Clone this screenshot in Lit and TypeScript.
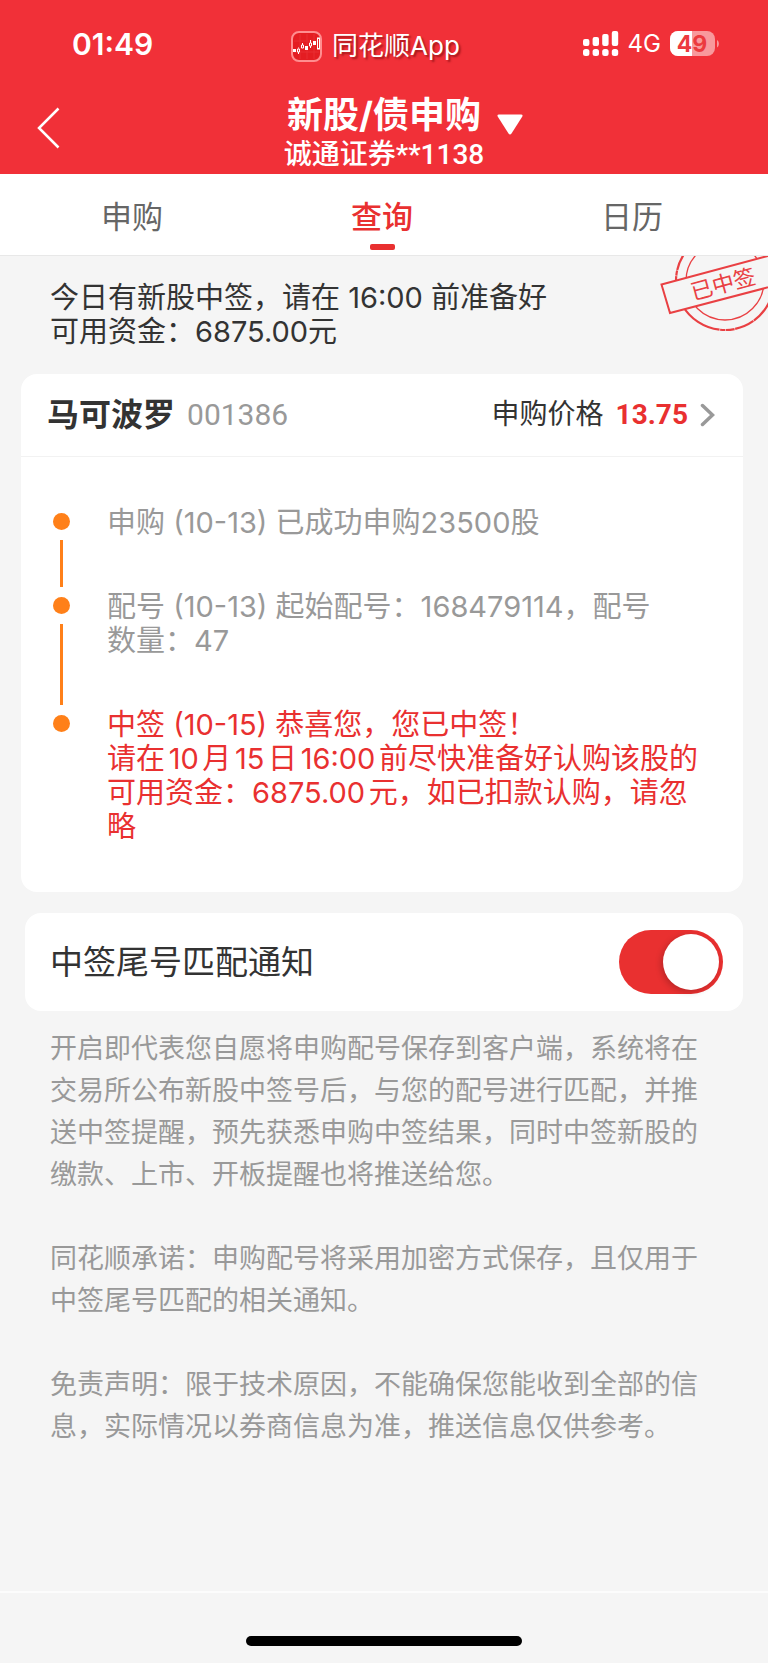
import { LitElement, html, css, svg } from "lit";
import { customElement, property, state } from "lit/decorators.js";
import { classMap } from "lit/directives/class-map.js";

interface Step {
  lines: string[];
  highlight?: boolean;
}

const TABS = ["申购", "查询", "日历"];

const STEPS: Step[] = [
  { lines: ["申购 (10-13) 已成功申购23500股"] },
  { lines: ["配号 (10-13) 起始配号：168479114，配号", "数量：47"] },
  {
    lines: [
      "中签 (10-15) 恭喜您，您已中签！",
      "请在10月15日16:00前尽快准备好认购该股的",
      "可用资金：6875.00元，如已扣款认购，请忽",
      "略",
    ],
    highlight: true,
  },
];

const NOTES = [
  "开启即代表您自愿将申购配号保存到客户端，系统将在交易所公布新股中签号后，与您的配号进行匹配，并推送中签提醒，预先获悉申购中签结果，同时中签新股的缴款、上市、开板提醒也将推送给您。",
  "同花顺承诺：申购配号将采用加密方式保存，且仅用于中签尾号匹配的相关通知。",
  "免责声明：限于技术原因，不能确保您能收到全部的信息，实际情况以券商信息为准，推送信息仅供参考。",
];

@customElement("status-bar")
export class StatusBar extends LitElement {
  static styles = css`
    :host {
      display: grid;
      grid-template-columns: 1fr auto 1fr;
      align-items: center;
      height: 88px;
      padding: 0 49px 0 32px;
      box-sizing: border-box;
      color: #fff;
    }
    .time {
      padding-left: 40px;
      font-size: 30px;
      font-weight: 600;
      line-height: 40px;
    }
    .source {
      display: flex;
      align-items: center;
      gap: 10px;
      padding-top: 4px;
      font-size: 26px;
      line-height: 32px;
      text-shadow: 2px 2px 2px rgba(90, 0, 0, 0.5);
    }
    .right {
      display: flex;
      justify-content: flex-end;
      align-items: center;
      gap: 9px;
      font-size: 24px;
      line-height: 32px;
    }
    svg {
      display: block;
      flex: none;
      overflow: visible;
    }
    .level {
      font-size: 23px;
      font-weight: 700;
    }
  `;

  render() {
    const bars = [0, 1, 2, 3];
    const tops = [8, 6, 3, 0];
    return html`
      <span class="time">01:49</span>
      <span class="source">
        <svg width="31" height="31" viewBox="0 0 31 31" aria-hidden="true">
          <rect x="1" y="1" width="29" height="29" rx="7" fill="#e41d22" stroke="#ff8d8f" stroke-width="2" />
          <path d="M9 3v25M16 3v25M23 3v25M3 10h25M3 21h25" stroke="#ee3f43" stroke-width="1" opacity=".5" />
          <g fill="#fff">
            <rect x="2" y="18" width="3" height="3" />
            <rect x="14" y="15" width="3" height="4" />
            <rect x="22" y="10" width="3" height="4" />
          </g>
          <g fill="none" stroke="#fff" stroke-width="1">
            <path d="M7.5 16.500v1M6.500 18h2v3h-2zM7.500 21v2M11.500 12v2M10.500 14h2v3h-2zM19.500 9v3M18.500 12h2v3h-2zM19.500 15v2" />
            <rect x="26.500" y="7" width="2" height="11" />
          </g>
        </svg>
        <span>同花顺App</span>
      </span>
      <span class="right">
        <svg width="36" height="26" viewBox="0 0 36 26" fill="#fff" aria-label="信号">
          ${bars.map(
            (i) => svg`
              <rect x=${i * 9.6} y=${tops[i]} width="6.4" height=${15 - tops[i]} rx="2" />
              <rect x=${i * 9.6} y="18" width="6.4" height="7" rx="2.500" />`,
          )}
        </svg>
        <span>4G</span>
        <svg width="49" height="26" viewBox="0 0 49 26" aria-label="电量">
          <rect width="45" height="25" rx="8" fill="#f8999c" />
          <path d="M8 0H22V25H8a8 8 0 0 1-8-8V8a8 8 0 0 1 8-8z" fill="#fff" />
          <path d="M47 9c2.500 1.500 2.500 6 0 7.500z" fill="#f8999c" />
          <text class="level" x="22" y="21" text-anchor="middle" fill="#ec3a3e">49</text>
        </svg>
      </span>
    `;
  }
}

@customElement("win-stamp")
export class WinStamp extends LitElement {
  static styles = css`
    :host {
      display: block;
    }
    svg {
      display: block;
    }
    .label {
      font-size: 22px;
    }
  `;

  render() {
    return html`
      <svg width="110" height="78" viewBox="0 0 110 78" role="img" aria-label="已中签">
        <g fill="none" stroke="#e94043">
          <circle cx="67" cy="25" r="49" stroke-width="2.200" stroke-dasharray="46 .6 20 .6 9 .6 5 .6" />
          <circle cx="67" cy="25" r="39" stroke-width="1.300" />
          <path d="M3.500 28.500L130 -5.500L138 24L12 57z" fill="#f5f5f5" stroke-width="2" />
        </g>
        <text
          class="label"
          x="65"
          y="36"
          text-anchor="middle"
          fill="#e94043"
          transform="rotate(-15 65 28)"
        >已中签</text>
      </svg>
    `;
  }
}

@customElement("step-list")
export class StepList extends LitElement {
  @property({ attribute: false }) steps: Step[] = [];

  static styles = css`
    ol {
      list-style: none;
      margin: 0;
      padding: 49px 24px 48px 32px;
    }
    .step {
      display: flex;
      gap: 37px;
      padding: 0;
    }
    .rail {
      display: flex;
      flex-direction: column;
      align-items: center;
      width: 17px;
      flex: none;
    }
    .dot {
      width: 17px;
      height: 17px;
      margin: 7px 0 10px;
      border-radius: 50%;
      background: #ff8019;
    }
    .line {
      flex: 1;
      width: 3px;
      margin-bottom: 3px;
      background: #ff8019;
    }
    .text {
      margin: 0;
      padding-bottom: 50px;
      font-size: 29px;
      line-height: 34px;
      color: #999;
      white-space: nowrap;
    }
    .step:last-child .text {
      padding-bottom: 0;
    }
    .highlight {
      color: #e93030;
      text-autospace: normal;
    }
  `;

  render() {
    return html`
      <ol>
        ${this.steps.map(
          (s, i) => html`
            <li class="step">
              <span class="rail">
                <span class="dot"></span>
                ${i < this.steps.length - 1 ? html`<span class="line"></span>` : null}
              </span>
              <p class=${classMap({ text: true, highlight: !!s.highlight })}>
                ${s.lines.map((l, n) => (n ? html`<br />${l}` : l))}
              </p>
            </li>
          `,
        )}
      </ol>
    `;
  }
}

@customElement("app-root")
export class AppRoot extends LitElement {
  @state() private tab = 1;
  @state() private notify = true;

  static styles = css`
    :host {
      display: flex;
      flex-direction: column;
      min-height: 100vh;
      background: #f5f5f5;
      color: #333;
      font-family: Inter, "Noto Sans CJK SC", sans-serif;
      overflow-x: hidden;
    }
    button {
      border: 0;
      padding: 0;
      margin: 0;
      background: none;
      font: inherit;
      color: inherit;
    }
    svg {
      display: block;
    }
    .header {
      background: #f13038;
      color: #fff;
    }
    .nav {
      display: grid;
      grid-template-columns: 1fr auto 1fr;
      height: 86px;
    }
    .back {
      justify-self: start;
      align-self: center;
      padding: 0 36px 6px;
    }
    .title {
      margin: 0;
      padding-top: 4px;
      font-size: 36px;
      font-weight: 700;
      line-height: 46px;
      text-align: center;
    }
    .account {
      margin: 0;
      font-family: Roboto, "Noto Sans CJK SC", sans-serif;
      font-size: 28px;
      font-weight: 500;
      line-height: 34px;
      text-align: center;
    }
    .caret {
      justify-self: start;
      align-self: start;
      padding: 26px 13px;
    }
    .tabs {
      display: flex;
      height: 81px;
      padding: 0 11px 0 7px;
      background: #fff;
      border-bottom: 1px solid #e8e8e8;
    }
    .tab {
      flex: 1;
      display: flex;
      flex-direction: column;
      align-items: center;
      padding-top: 21px;
      gap: 5px;
      font-size: 31px;
      line-height: 44px;
      color: #666;
    }
    .tab.active {
      color: #e93030;
      font-weight: 500;
    }
    .tab.active::after {
      content: "";
      width: 25px;
      height: 6px;
      border-radius: 2px;
      background: #e93030;
    }
    .notice {
      position: relative;
      padding: 25px 50px;
      font-size: 29px;
      line-height: 34px;
    }
    .notice p {
      margin: 0;
    }
    .stamp {
      position: absolute;
      top: 0;
      right: 0;
    }
    .card {
      margin: 0 25px 0 21px;
      border-radius: 16px;
      background: #fff;
    }
    .stock {
      display: flex;
      align-items: center;
      height: 82px;
      padding: 0 28px 0 26px;
      border-bottom: 1px solid #f2f2f2;
      color: inherit;
      text-decoration: none;
      font-family: Roboto, "Noto Sans CJK SC", sans-serif;
      line-height: 40px;
    }
    .name {
      margin: 0 12px 0 0;
      font-size: 32px;
      font-weight: 700;
    }
    .code {
      flex: 1;
      font-size: 30px;
      color: #999;
    }
    .label {
      margin-right: 12px;
      font-size: 28px;
    }
    .price {
      margin-right: 12px;
      font-size: 28px;
      font-weight: 700;
      color: #e93030;
    }
    .setting {
      display: flex;
      align-items: center;
      justify-content: space-between;
      height: 98px;
      margin: 21px 25px 0;
      padding: 0 20px 0 25px;
      border-radius: 16px;
      background: #fff;
      font-size: 33px;
      line-height: 44px;
    }
    .switch {
      appearance: none;
      display: block;
      width: 104px;
      height: 64px;
      margin: 0;
      padding: 4px;
      box-sizing: border-box;
      border-radius: 32px;
      background: #ccc;
    }
    .switch::before {
      content: "";
      display: block;
      width: 56px;
      height: 56px;
      border-radius: 50%;
      background: #fff;
      box-shadow: -2px 2px 6px rgba(0, 0, 0, 0.2);
    }
    .switch:checked {
      background: #e93030;
    }
    .switch:checked::before {
      margin-left: auto;
    }
    .notes {
      flex: 1;
      display: flex;
      flex-direction: column;
      gap: 42px;
      padding: 17px 60px 42px 50px;
      font-size: 27px;
      line-height: 42px;
      color: #999;
    }
    .notes p {
      margin: 0;
    }
    .home {
      display: flex;
      justify-content: center;
      padding: 43px 0 17px;
      border-top: 2px solid #fcfcfc;
    }
    .indicator {
      width: 36%;
      height: 10px;
      border-radius: 5px;
      background: #000;
    }
  `;

  render() {
    return html`
      <header class="header">
        <status-bar></status-bar>
        <div class="nav">
          <button class="back" aria-label="返回">
            <svg width="24" height="42" viewBox="0 0 24 42" fill="none" stroke="#fff" stroke-width="2.500">
              <path d="M22.500 1.500L3 21L22.500 40.500" />
            </svg>
          </button>
          <div>
            <h1 class="title">新股/债申购</h1>
            <p class="account">诚通证券**1138</p>
          </div>
          <button class="caret" aria-label="切换账户">
            <svg width="26" height="21" viewBox="0 0 26 21" fill="#fff">
              <path d="M2 .5h22q2.500 0 1 2.500L14.500 19.500q-1.500 2-3 0L1 3Q-.5 .5 2 .5z" />
            </svg>
          </button>
        </div>
      </header>

      <nav class="tabs">
        ${TABS.map(
          (t, i) => html`
            <button class=${classMap({ tab: true, active: i === this.tab })} @click=${() => (this.tab = i)}>
              ${t}
            </button>
          `,
        )}
      </nav>

      <section class="notice">
        <p>今日有新股中签，请在 16:00 前准备好<br />可用资金：6875.00元</p>
        <win-stamp class="stamp"></win-stamp>
      </section>

      <section class="card">
        <a class="stock" href="#stock">
          <h2 class="name">马可波罗</h2>
          <span class="code">001386</span>
          <span class="label">申购价格</span>
          <span class="price">13.75</span>
          <svg width="15" height="24" viewBox="0 0 15 24" fill="none" stroke="#999" stroke-width="3.500" stroke-linecap="round">
            <path d="M2.500 2.500L12.500 12L2.500 21.500" />
          </svg>
        </a>
        <step-list .steps=${STEPS}></step-list>
      </section>

      <section class="setting">
        <label for="notify">中签尾号匹配通知</label>
        <input
          class="switch"
          id="notify"
          type="checkbox"
          role="switch"
          .checked=${this.notify}
          @change=${(e: Event) => (this.notify = (e.target as HTMLInputElement).checked)}
        />
      </section>

      <section class="notes">${NOTES.map((n) => html`<p>${n}</p>`)}</section>

      <footer class="home"><span class="indicator"></span></footer>
    `;
  }
}
